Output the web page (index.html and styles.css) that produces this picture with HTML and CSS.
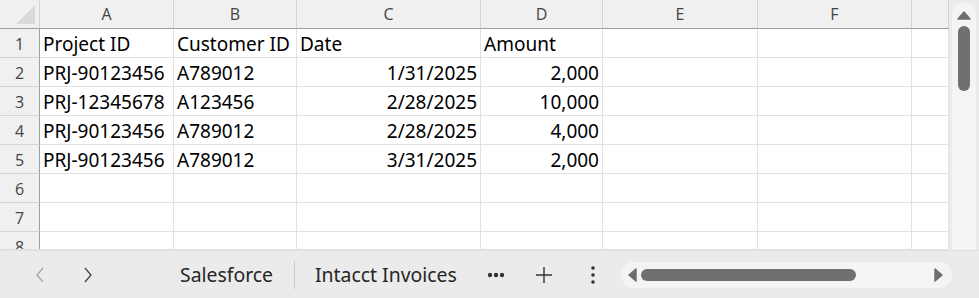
FILE: index.html
```html
<!DOCTYPE html>
<html lang="en">
<head>
    <meta charset="UTF-8">
    <title>Sheet</title>
    <link rel="stylesheet" href="styles.css">
</head>
<body>

<div class="app">
    <div class="workspace">
        <!-- Spreadsheet grid -->
        <div class="sheet">
            <div class="corner"><span class="corner-tri"></span></div>
            <div class="col-head">A</div>
            <div class="col-head">B</div>
            <div class="col-head">C</div>
            <div class="col-head">D</div>
            <div class="col-head">E</div>
            <div class="col-head">F</div>
            <div class="col-head"></div>

            <div class="row-head">1</div>
            <div class="cell">Project ID</div>
            <div class="cell">Customer ID</div>
            <div class="cell">Date</div>
            <div class="cell">Amount</div>
            <div class="cell"></div>
            <div class="cell"></div>
            <div class="cell"></div>

            <div class="row-head">2</div>
            <div class="cell">PRJ-90123456</div>
            <div class="cell">A789012</div>
            <div class="cell num">1/31/2025</div>
            <div class="cell num">2,000</div>
            <div class="cell"></div>
            <div class="cell"></div>
            <div class="cell"></div>

            <div class="row-head">3</div>
            <div class="cell">PRJ-12345678</div>
            <div class="cell">A123456</div>
            <div class="cell num">2/28/2025</div>
            <div class="cell num">10,000</div>
            <div class="cell"></div>
            <div class="cell"></div>
            <div class="cell"></div>

            <div class="row-head">4</div>
            <div class="cell">PRJ-90123456</div>
            <div class="cell">A789012</div>
            <div class="cell num">2/28/2025</div>
            <div class="cell num">4,000</div>
            <div class="cell"></div>
            <div class="cell"></div>
            <div class="cell"></div>

            <div class="row-head">5</div>
            <div class="cell">PRJ-90123456</div>
            <div class="cell">A789012</div>
            <div class="cell num">3/31/2025</div>
            <div class="cell num">2,000</div>
            <div class="cell"></div>
            <div class="cell"></div>
            <div class="cell"></div>

            <div class="row-head">6</div>
            <div class="cell"></div><div class="cell"></div><div class="cell"></div><div class="cell"></div><div class="cell"></div><div class="cell"></div><div class="cell"></div>

            <div class="row-head">7</div>
            <div class="cell"></div><div class="cell"></div><div class="cell"></div><div class="cell"></div><div class="cell"></div><div class="cell"></div><div class="cell"></div>

            <div class="row-head">8</div>
            <div class="cell"></div><div class="cell"></div><div class="cell"></div><div class="cell"></div><div class="cell"></div><div class="cell"></div><div class="cell"></div>
        </div>

        <!-- Vertical scrollbar -->
        <div class="vscroll">
            <div class="vtrack">
                <svg class="arrow" width="14" height="10" viewBox="0 0 14 10"><path d="M1 9 L7 2 L13 9 Z" fill="#6e6e6e" stroke="#6e6e6e" stroke-linejoin="round" stroke-width="1.5"/></svg>
                <div class="vthumb"></div>
                <div class="vspace"></div>
                <svg class="arrow" width="14" height="10" viewBox="0 0 14 10"><path d="M1 1 L7 8 L13 1 Z" fill="#6e6e6e" stroke="#6e6e6e" stroke-linejoin="round" stroke-width="1.5"/></svg>
            </div>
        </div>
    </div>

    <!-- Sheet tabs bar -->
    <div class="tabbar">
        <div class="nav">
            <svg width="10" height="16" viewBox="0 0 10 16"><path d="M8 1 L2 8 L8 15" fill="none" stroke="#a6a6a6" stroke-width="1.3"/></svg>
            <svg width="10" height="16" viewBox="0 0 10 16"><path d="M2 1 L8 8 L2 15" fill="none" stroke="#444" stroke-width="1.3"/></svg>
        </div>
        <div class="tabs">
            <span class="tab">Salesforce</span>
            <span class="tab-sep"></span>
            <span class="tab">Intacct Invoices</span>
        </div>
        <div class="tools">
            <svg class="tool-more" width="20" height="8" viewBox="0 0 20 8"><circle cx="4" cy="4" r="2.2" fill="#333"/><circle cx="10" cy="4" r="2.2" fill="#333"/><circle cx="16" cy="4" r="2.2" fill="#333"/></svg>
            <svg class="tool-add" width="18" height="18" viewBox="0 0 18 18"><path d="M9 1 V17 M1 9 H17" stroke="#333" stroke-width="1.4"/></svg>
            <svg class="tool-menu" width="6" height="20" viewBox="0 0 6 20"><circle cx="3" cy="3" r="1.8" fill="#333"/><circle cx="3" cy="10" r="1.8" fill="#333"/><circle cx="3" cy="17" r="1.8" fill="#333"/></svg>
        </div>
        <div class="hscroll">
            <svg width="10" height="14" viewBox="0 0 10 14"><path d="M9 1 L2 7 L9 13 Z" fill="#6e6e6e" stroke="#6e6e6e" stroke-linejoin="round" stroke-width="1.5"/></svg>
            <div class="hthumb"></div>
            <div class="hspace"></div>
            <svg width="10" height="14" viewBox="0 0 10 14"><path d="M1 1 L8 7 L1 13 Z" fill="#6e6e6e" stroke="#6e6e6e" stroke-linejoin="round" stroke-width="1.5"/></svg>
        </div>
    </div>
</div>

</body>
</html>
```

FILE: styles.css
```css
/* Spreadsheet window */
body {
    margin: 0;
    padding: 0;
    background: #ebebeb;
    font-family: "Noto Sans", "Open Sans", sans-serif;
}
.app {
    width: 979px;
    height: 298px;
    display: flex;
    flex-direction: column;
    overflow: hidden;
}
.workspace {
    height: 250px;
    display: flex;
    overflow: hidden;
    background: #ffffff;
}
.sheet {
    display: grid;
    grid-template-columns: 40px 134px 123px 184px 122px 155px 154px 37px;
    grid-auto-rows: 29px;
    width: 949px;
    height: 250px;
    overflow: hidden;
    border-bottom: 1px solid #e1e1e1;
    box-sizing: border-box;
}
.corner {
    background: #f0f0f0;
    border-right: 1px solid #d4d4d4;
    border-bottom: 1px solid #9e9e9e;
    position: relative;
}
.corner-tri {
    position: absolute;
    right: 4px;
    bottom: 4px;
    width: 0;
    height: 0;
    border-left: 19px solid transparent;
    border-bottom: 19px solid #dadada;
}
.col-head {
    background: #f0f0f0;
    border-right: 1px solid #d4d4d4;
    border-bottom: 1px solid #9e9e9e;
    color: #444444;
    font-family: "Open Sans", sans-serif;
    font-size: 16px;
    text-align: center;
    line-height: 28px;
    box-sizing: border-box;
}
.row-head {
    background: #f0f0f0;
    border-right: 1px solid #9e9e9e;
    border-bottom: 1px solid #d4d4d4;
    color: #444444;
    font-family: "Open Sans", sans-serif;
    font-size: 16px;
    text-align: center;
    line-height: 30px;
    box-sizing: border-box;
}
.cell {
    border-right: 1px solid #e1e1e1;
    border-bottom: 1px solid #e1e1e1;
    box-sizing: border-box;
    padding: 0 3px;
    font-size: 19px;
    line-height: 30px;
    color: #000000;
    white-space: nowrap;
    overflow: hidden;
}
.cell.num {
    text-align: right;
}
.vscroll {
    width: 30px;
    background: #ebebeb;
    padding: 2px 3px 0 3px;
    box-sizing: border-box;
}
.vtrack {
    height: 256px;
    background: #f4f4f4;
    border-radius: 12px;
    display: flex;
    flex-direction: column;
    align-items: center;
    padding-top: 8px;
}
.vthumb {
    width: 12px;
    height: 65px;
    margin-top: 6px;
    background: #707070;
    border-radius: 6px;
}
.vspace {
    flex: 1;
}
.tabbar {
    flex: 1;
    display: flex;
    align-items: center;
    background: #ebebeb;
    border-top: 1px solid #e0e0e0;
}
.nav {
    display: flex;
    gap: 38px;
    padding-left: 35px;
    width: 140px;
    box-sizing: border-box;
}
.tabs {
    display: flex;
    align-items: center;
    font-size: 19.4px;
    color: #262626;
    margin-left: 40px;
}
.tab-sep {
    width: 1px;
    height: 28px;
    background: #c8c8c8;
    margin: 0 20px 0 21px;
}
.tools {
    display: flex;
    align-items: center;
    margin-left: 29px;
}
.tool-add {
    margin-left: 29px;
}
.tool-menu {
    margin-left: 37px;
}
.hscroll {
    margin-left: 25px;
    width: 331px;
    height: 26px;
    background: #f4f4f4;
    border-radius: 13px;
    display: flex;
    align-items: center;
    padding: 0 8px 0 6px;
    box-sizing: border-box;
}
.hthumb {
    width: 215px;
    height: 12px;
    background: #707070;
    border-radius: 6px;
    margin-left: 4px;
}
.hspace {
    flex: 1;
}
```
